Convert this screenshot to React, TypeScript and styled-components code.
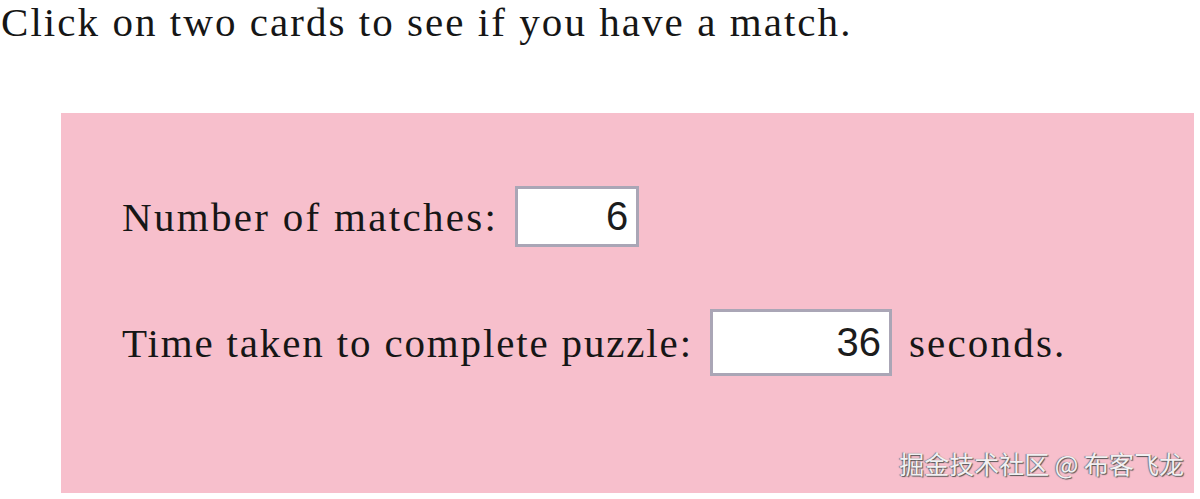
import * as React from "react";
import styled, { createGlobalStyle } from "styled-components";

const GlobalStyle = createGlobalStyle`
  html, body {
    margin: 0;
    padding: 0;
    background: #ffffff;
  }
  body {
    font-family: "Liberation Serif", "Times New Roman", serif;
    color: #161616;
  }
`;

const Page = styled.div`
  width: 1200px;
  height: 499px;
  overflow: hidden;
`;

const Intro = styled.p`
  margin: 0;
  padding: 0 0 0 1px;
  height: 113px;
  font-size: 41px;
  line-height: 44px;
  letter-spacing: 2.05px;
`;

const Panel = styled.section`
  position: relative;
  margin-left: 61px;
  width: 1133px;
  height: 380px;
  background: #f7bfcc;
  padding: 73px 0 0 61px;
  box-sizing: border-box;
  display: flex;
  flex-direction: column;
  gap: 62px;
`;

const Row = styled.div`
  display: flex;
  align-items: center;
  gap: 17px;
  font-size: 41px;
`;

const Label = styled.span<{ $spacing: number }>`
  letter-spacing: ${p => p.$spacing}px;
`;

const NumberBox = styled.div<{ $width: number; $height: number }>`
  box-sizing: border-box;
  width: ${p => p.$width}px;
  height: ${p => p.$height}px;
  background: #ffffff;
  border: 3px solid #aaa6b6;
  display: flex;
  align-items: center;
  justify-content: flex-end;
  padding-right: 8px;
  font-family: "Liberation Sans", Arial, sans-serif;
  font-size: 40px;
  color: #1c1c1c;
`;

const Watermark = styled.span`
  position: absolute;
  right: 10px;
  bottom: 12px;
  font-family: "Noto Sans CJK SC", "Noto Sans", sans-serif;
  font-size: 25px;
  color: #f2f0f2;
  text-shadow: 1px 1px 1px #555, -1px 0 1px #777;
`;

export default function App() {
  return (
    <Page>
      <GlobalStyle />
      <Intro>Click on two cards to see if you have a match.</Intro>
      <Panel>
        <Row>
          <Label $spacing={2.3}>Number of matches:</Label>
          <NumberBox $width={124} $height={61}>6</NumberBox>
        </Row>
        <Row>
          <Label $spacing={1.85}>Time taken to complete puzzle:</Label>
          <NumberBox $width={182} $height={67}>36</NumberBox>
          <Label $spacing={2.2}>seconds.</Label>
        </Row>
        <Watermark>掘金技术社区 @ 布客飞龙</Watermark>
      </Panel>
    </Page>
  );
}
